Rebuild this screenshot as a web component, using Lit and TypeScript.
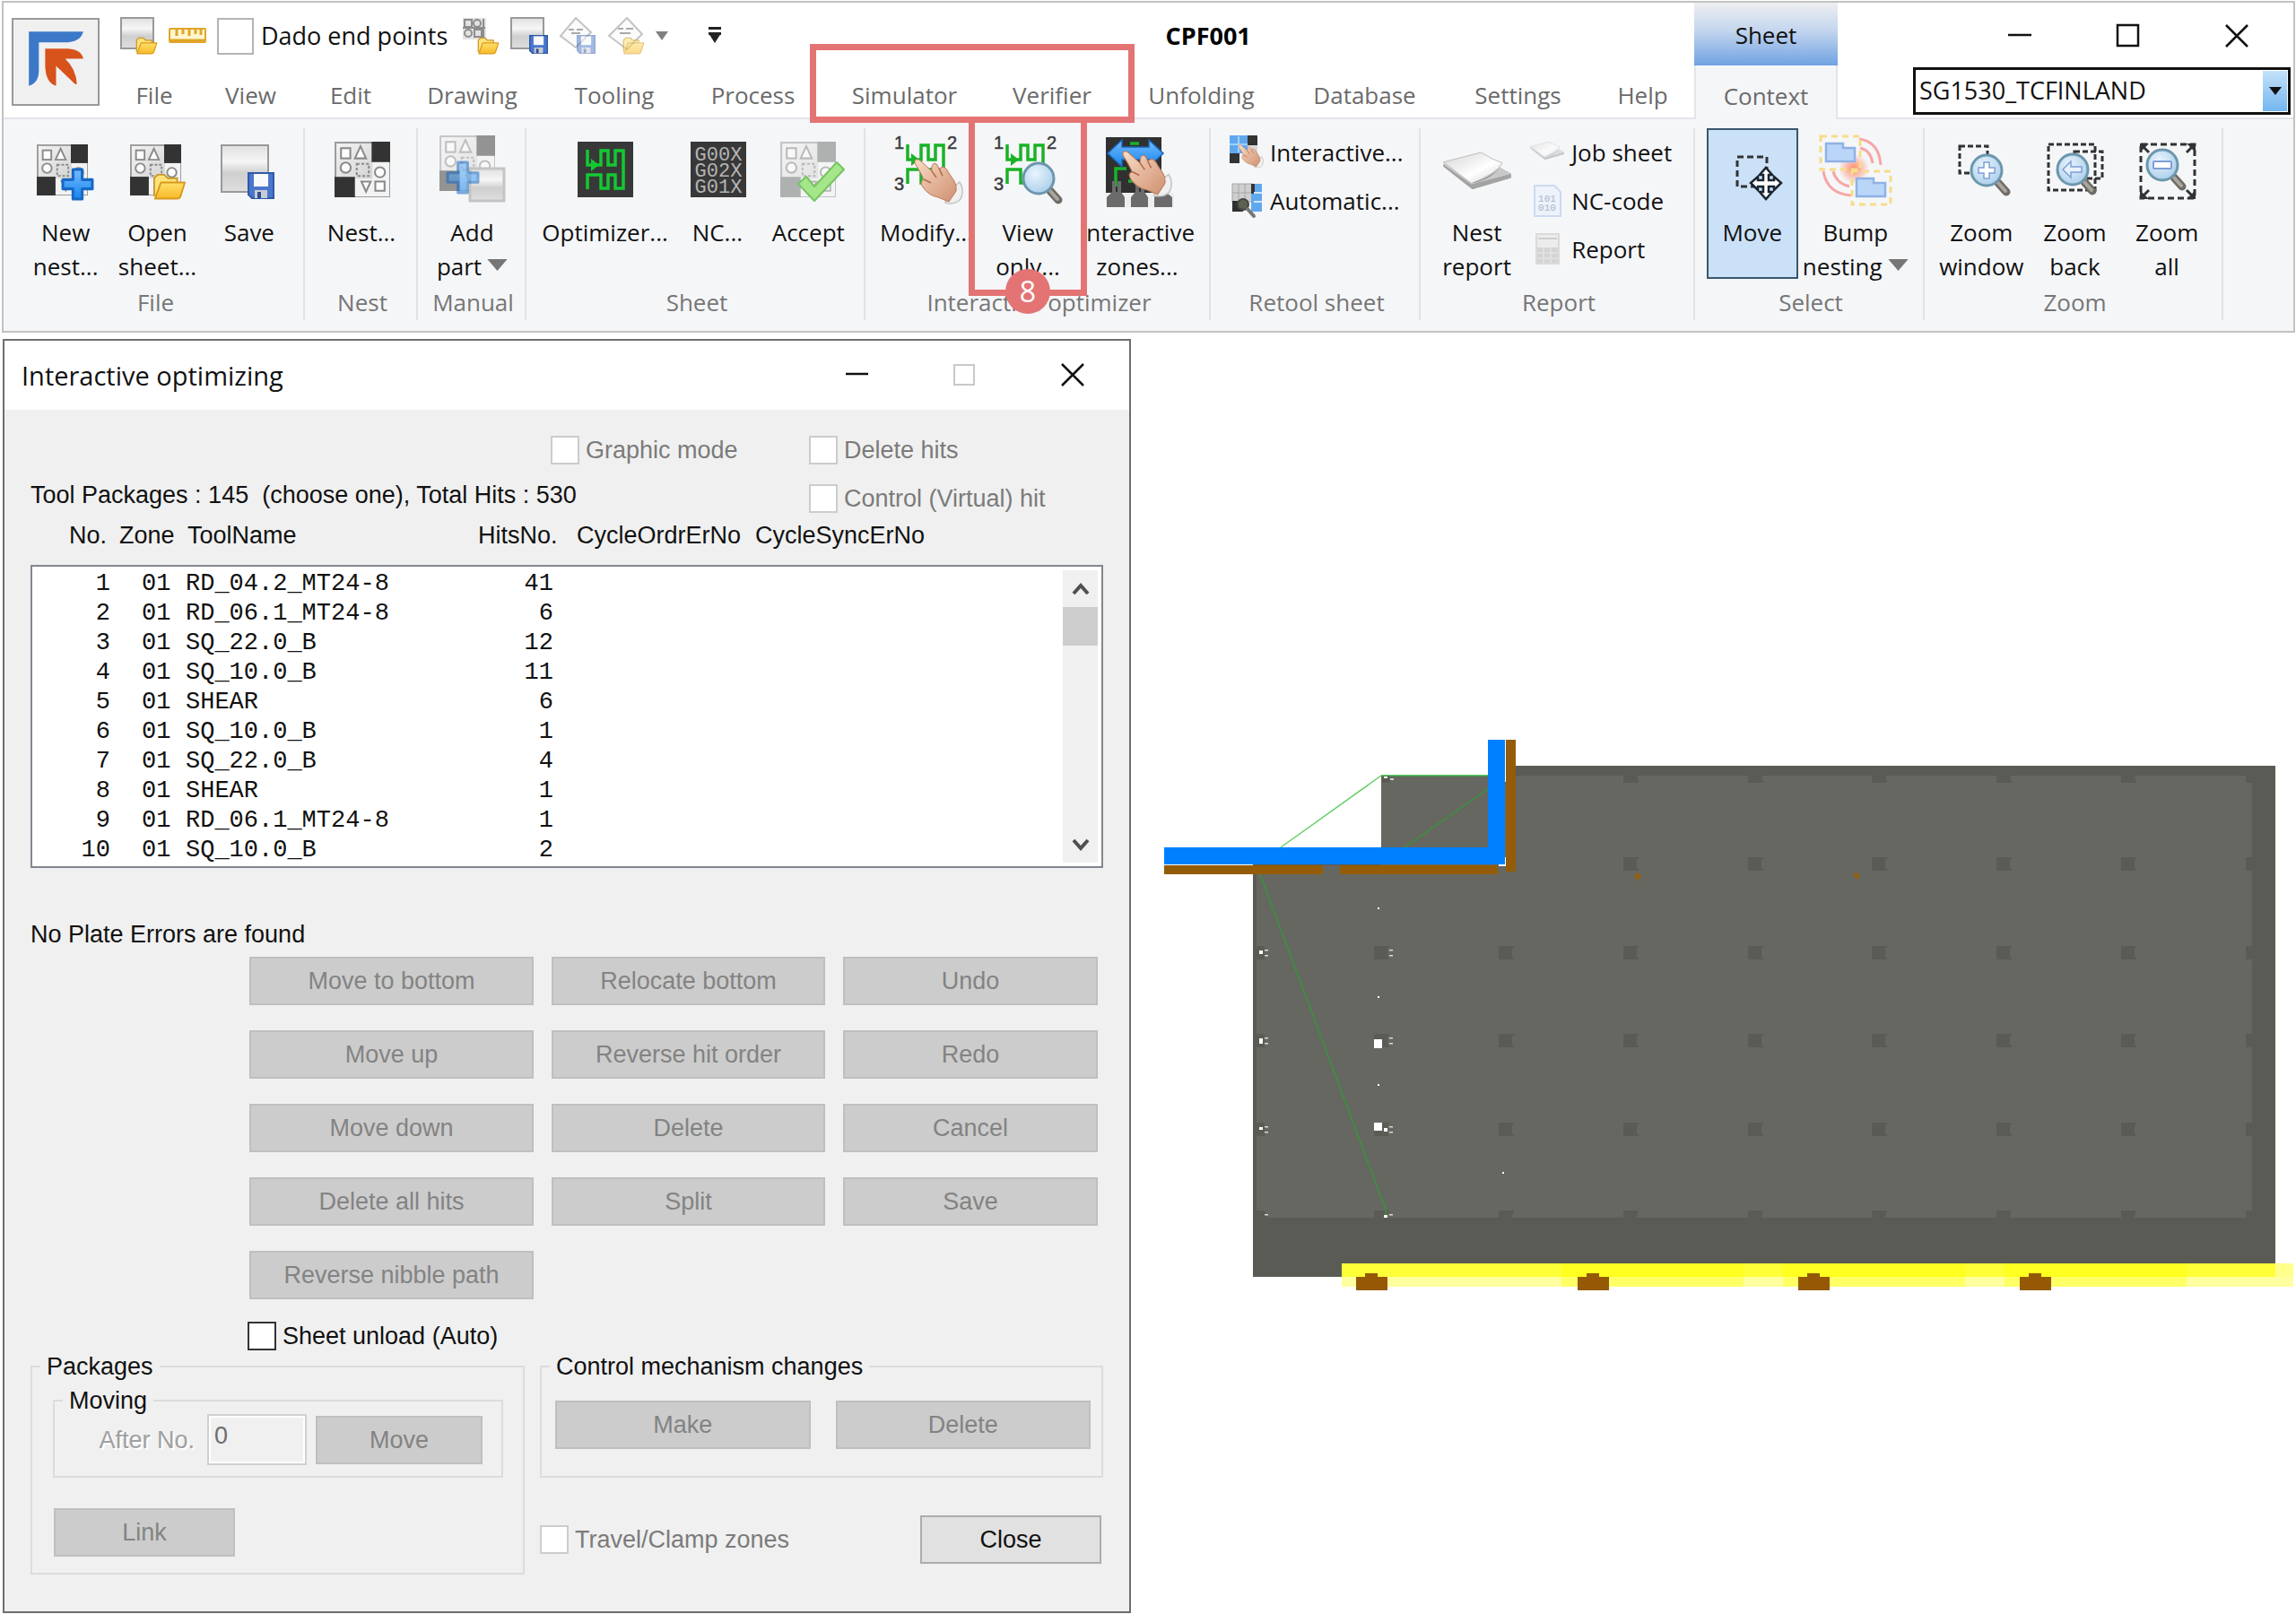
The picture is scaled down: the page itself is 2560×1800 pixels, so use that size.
import { LitElement, html, svg, css, nothing } from "lit";
import { customElement } from "lit/decorators.js";

/* ---------- shared icon parts ---------- */

/* Nested sheet: outlined parts on grey, with two dark remnant squares. */
const nestSheet = (x: number, y: number, size: number, dark = "#333333", opacity = 1) => svg`
  <svg x=${x} y=${y} width=${size} height=${size} viewBox="0 0 60 60" opacity=${opacity}>
    <rect x="1" y="1" width="58" height="58" fill="url(#sheet)" stroke="#9c9c9c" stroke-width="2"/>
    <path d="M21 40V59H59V22H41V40Z" fill="#f3f3f3"/>
    <rect x="40" y="0" width="20" height="22" fill=${dark}/>
    <rect x="0" y="38" width="22" height="22" fill=${dark}/>
    <g fill="#fdfdfd" stroke="#8a8a8a" stroke-width="2">
      <rect x="7" y="7" width="10" height="11"/>
      <path d="M28 5L34 18H22Z"/>
      <circle cx="12" cy="28" r="5.5"/>
      <rect x="24" y="24" width="13" height="13" fill="none" stroke-dasharray="3 2"/>
      <circle cx="49" cy="33" r="5.5"/>
      <path d="M29 43H39L34 54Z"/>
      <rect x="44" y="43" width="10" height="10"/>
    </g>
  </svg>`;

const folder = (x: number, y: number, w: number) => svg`
  <svg x=${x} y=${y} width=${w} height=${w * 0.8} viewBox="0 0 40 32">
    <path d="M2 27V6L6 2H14L18 6H29V12" fill="#ffe27a" stroke="#c9982a" stroke-width="2"/>
    <path d="M3 30L10 11H38L33 27Q32 30 29 30Z" fill="url(#gold)" stroke="#d79a1c" stroke-width="2" stroke-linejoin="round"/>
  </svg>`;

const floppy = (x: number, y: number, w: number) => svg`
  <svg x=${x} y=${y} width=${w} height=${w} viewBox="0 0 30 30">
    <path d="M1 1H29V29H5L1 25Z" fill="#4a77cc" stroke="#3059a8" stroke-width="2"/>
    <rect x="7" y="2" width="16" height="14" fill="#f7f9fc"/>
    <rect x="8" y="20" width="14" height="9" fill="#c9ccd2"/>
    <rect x="11" y="22" width="4" height="7" fill="#2d4f93"/>
  </svg>`;

const plus = (x: number, y: number, w: number) => svg`
  <svg x=${x} y=${y} width=${w} height=${w} viewBox="0 0 36 36">
    <path d="M13 2H23V13H34V23H23V34H13V23H2V13H13Z" fill="url(#azure)" stroke="#1769c4" stroke-width="3" stroke-linejoin="round"/>
  </svg>`;

const hand = (x: number, y: number, w: number) => svg`
  <svg x=${x} y=${y} width=${w} height=${w * 0.93} viewBox="0 0 56 52">
    <path d="M38 37L52 26Q58 35 53 45Q47 52 36 49Z" fill="#efefef" stroke="#c4c4c4" stroke-width="1.5"/>
    <path d="M2 2Q5 -1 9 3L21 14Q20 6 24 5Q27 5 29 11L34 9Q38 11 40 16L46 25Q49 30 48 36L40 48L28 43Q18 41 12 33Q6 26 12 23Q9 16 2 5Z" fill="url(#skin)" stroke="#b9795a" stroke-width="1"/>
    <path d="M21 14L26 21M29 11L33 19M12 23L20 27" stroke="#b06a4a" stroke-width="1.5" fill="none"/>
  </svg>`;

const glass = (cx: number, cy: number, sign: unknown = nothing) => svg`
  <svg x=${cx - 20} y=${cy - 20} width="48" height="50" viewBox="0 0 48 50">
    <path d="M33 34L42 44" stroke="#6f6b66" stroke-width="9" stroke-linecap="round"/>
    <path d="M33 34L41 43" stroke="#aaa59d" stroke-width="4" stroke-linecap="round"/>
    <circle cx="20" cy="20" r="17" fill="url(#lens)" stroke="#6c97ad" stroke-width="3"/>
    ${sign}
  </svg>`;

/* Punching path that meanders and ends in an arrow head. */
const meander = (x: number, y: number, color: string) => svg`
  <svg x=${x} y=${y} width="44" height="48" viewBox="0 0 44 48">
    <path d="M2 2V19H17V3H25V19H33V3H42V45H33V30H25V45H17V30H2V46" fill="none" stroke=${color} stroke-width="3.5"/>
    <path d="M6 12L15 19L6 26Z" fill=${color}/>
  </svg>`;

const pathDigits = (x: number) => svg`
  <g font-family="Liberation Sans, sans-serif" font-size="20" fill="#3c3c3c" stroke="#3c3c3c" stroke-width="0.5">
    <text x=${x} y="18">1</text><text x=${x + 59} y="18">2</text><text x=${x} y="64">3</text>
  </g>`;

const paper = (x: number, y: number, w: number, opacity = 1) => svg`
  <svg x=${x} y=${y} width=${w} height=${w * 0.56} viewBox="0 0 80 45" opacity=${opacity}>
    <path d="M1 15L33 38L78 26V31L34 44L1 18Z" fill="#a3a3a3"/>
    <path d="M1 15L33 38L78 26L64 18Z" fill="#c9c9c9"/>
    <path d="M1 13L44 2Q56 10 68 14Q62 26 33 37Z" fill="url(#page)" stroke="#bdbdbd" stroke-width="1"/>
    <path d="M68 14Q62 28 33 37Q58 33 68 14Z" fill="#8f8f8f"/>
  </svg>`;

const big = (body: unknown) => html`<svg class="big-icon" viewBox="0 0 84 84" aria-hidden="true">${body}</svg>`;
const small = (body: unknown) => html`<svg class="small-icon" viewBox="0 0 40 40" aria-hidden="true">${body}</svg>`;

const bumpPart = (x: number, y: number) => svg`
  <path transform="translate(${x} ${y})" d="M1 1H20V6H33V21H1Z" fill="#b9d6f8" stroke="#8fb2e4" stroke-width="2.5"/>`;

const icons = {
  newNest: big(svg`${nestSheet(10, 13, 57)}${plus(37, 39, 37)}`),
  openSheet: big(svg`${nestSheet(12, 13, 57)}${folder(37, 45, 38)}`),
  save: big(svg`<rect x="11" y="14" width="52" height="52" fill="url(#metal)" stroke="#999" stroke-width="2"/>${floppy(40, 44, 30)}`),
  nest: big(nestSheet(12, 10, 62)),
  addPart: big(svg`
    ${nestSheet(5, 3, 62, "#333333", 0.5)}
    <rect x="39" y="40" width="38" height="36" fill="url(#metal)" stroke="#c4c4c4" stroke-width="3"/>
    <g opacity="0.55">${plus(12, 31, 38)}</g>`),
  optimizer: big(svg`<rect x="11" y="10" width="62" height="62" fill="#383838"/>${meander(20, 17, "#12c931")}`),
  nc: big(svg`
    <rect x="12" y="10" width="62" height="62" fill="#383838"/>
    <g font-family="Liberation Mono, monospace" font-size="22" fill="#b4b4b4" text-anchor="middle">
      <text x="43" y="31">G00X</text><text x="43" y="49">G02X</text><text x="43" y="67">G01X</text>
    </g>`),
  accept: big(svg`
    ${nestSheet(11, 10, 62, "#777777", 0.55)}
    <path d="M31 57L40 49L49 60L74 33L82 41L49 76Z" fill="#a5e68a" stroke="#77c562" stroke-width="2" stroke-linejoin="round"/>`),
  modify: big(svg`${pathDigits(6)}${meander(19, 11, "#18b327")}${hand(27, 29, 56)}`),
  viewOnly: big(svg`${pathDigits(4)}${meander(17, 11, "#18b327")}${glass(54, 51)}`),
  zones: big(svg`
    <rect x="7" y="5" width="62" height="62" fill="#303030"/>
    <path d="M18 60V40H30M34 12H44M32 54H42" stroke="#17b32a" stroke-width="3.5" fill="none"/>
    <path d="M9 23L25 8V16H55V8L71 23L55 38V30H25V38Z" fill="url(#azure)" stroke="#1a64b4" stroke-width="1.5"/>
    <rect x="7" y="67" width="76" height="16" fill="#eceef0"/>
    <path d="M8 83V72L14 66V54H18V66H20V54H24V66L28 72V83ZM35 83V72L40 66V56H44V66H46V56H50V66L54 72V83ZM61 83V72L66 68H76L81 72V83Z" fill="#6b6b6b"/>
    ${hand(24, 20, 57)}`),
  nestReport: big(paper(3, 20, 79)),
  move: big(svg`
    <rect x="25" y="27" width="33" height="33" fill="none" stroke="#333" stroke-width="3" stroke-dasharray="7 4"/>
    <path d="M57 39L64 47H60V53H66V49L74 56L66 64V60H60V66H64L57 74L50 66H54V60H48V64L40 56L48 49V53H54V47H50Z" fill="#fff" stroke="#1b2430" stroke-width="2.5"/>`),
  bump: big(svg`
    <circle cx="40" cy="40" r="17" fill="url(#glow)"/>
    <g fill="none" stroke="#f6a6a6" stroke-width="3">
      <path d="M46 7Q68 10 70 36M47 17Q59 20 61 34M6 43Q10 68 37 70M17 43Q20 56 35 60"/>
    </g>
    <g fill="none" stroke="#f7dc88" stroke-width="3" stroke-dasharray="7 5">
      <rect x="3" y="4" width="44" height="37"/><rect x="38" y="43" width="43" height="37"/>
    </g>
    ${bumpPart(8, 11)}${bumpPart(42, 50)}`),
  zoomWindow: big(svg`
    <rect x="18" y="15" width="31" height="30" fill="none" stroke="#333" stroke-width="3" stroke-dasharray="6 3"/>
    ${glass(48, 42, svg`<path d="M17 11H23V17H29V23H23V29H17V23H11V17H17Z" fill="#fff" stroke="#7d9fd8" stroke-width="1.5"/>`)}`),
  zoomBack: big(svg`
    <g fill="none" stroke="#333" stroke-width="3" stroke-dasharray="6 3">
      <rect x="13" y="13" width="52" height="51"/><rect x="42" y="21" width="31" height="30"/>
    </g>
    ${glass(40, 41, svg`<path d="M9 20L18 11V17H30V23H18V29Z" fill="#e9f1ff" stroke="#7d9fd8" stroke-width="1.5"/>`)}`),
  zoomAll: big(svg`
    <rect x="13" y="13" width="60" height="60" fill="none" stroke="#333" stroke-width="3" stroke-dasharray="7 4"/>
    <path d="M12 12H22L12 22ZM74 12V22L64 12ZM12 74V64L22 74ZM74 74H64L74 64Z" fill="#333"/>
    <path d="M14 14L22 22M72 14L64 22M14 72L22 64M72 72L64 64" stroke="#333" stroke-width="3"/>
    ${glass(37, 36, svg`<rect x="10" y="16" width="20" height="8" rx="1" fill="#fff" stroke="#7d9fd8" stroke-width="2"/>`)}`),
  interactive: small(svg`
    <rect x="2" y="1" width="20" height="20" fill="#5fa8ee"/><rect x="22" y="1" width="11" height="11" fill="#333"/>
    <path d="M12 2V20M2 11H22" stroke="#bcdcfb" stroke-width="1.5"/>
    <rect x="2" y="21" width="11" height="11" fill="#333"/><rect x="22" y="12" width="11" height="12" fill="#d9d9d9"/>
    ${hand(11, 11, 29)}`),
  automatic: small(svg`
    <rect x="5" y="1" width="22" height="20" fill="#cfcfcf" stroke="#a5a5a5"/>
    <path d="M12 1V21M19 1V21M5 11H27" stroke="#a5a5a5"/>
    <rect x="26" y="1" width="12" height="31" fill="#5fa8ee"/><rect x="26" y="1" width="4" height="11" fill="#333"/>
    <path d="M29 11H38M29 21H38" stroke="#cfe6fc" stroke-width="2"/>
    <rect x="5" y="20" width="12" height="12" fill="#2e2e2e"/>
    <circle cx="17" cy="24" r="6" fill="#5b6350" stroke="#444" stroke-width="2"/>
    <path d="M22 29L29 37" stroke="#777" stroke-width="4" stroke-linecap="round"/>`),
  jobSheet: small(paper(1, 7, 39, 0.55)),
  ncCode: small(svg`
    <path d="M6 3H28L35 10V37H6Z" fill="#eef2fa" stroke="#cddaf0" stroke-width="2"/>
    <g font-family="Liberation Mono, monospace" font-size="11" fill="#a9b4ca" text-anchor="middle"><text x="20" y="21">101</text><text x="20" y="31">010</text></g>`),
  report: small(svg`
    <rect x="8" y="3" width="25" height="33" fill="#ececec" stroke="#dadada" stroke-width="2"/>
    <path d="M10 8H31" stroke="#cdcdcd" stroke-width="2"/><rect x="9" y="18" width="23" height="17" fill="#d4d4d4"/>
    <path d="M9 24H32M9 30H32M16 18V35M24 18V35" stroke="#e4e4e4" stroke-width="1.5"/>`),
  openQuick: html`<svg class="quick-icon" viewBox="0 0 42 42" aria-hidden="true"><rect x="1" y="1" width="36" height="34" fill="url(#metal)" stroke="#999" stroke-width="2"/>${folder(17, 22, 25)}</svg>`,
  ruler: html`<svg class="quick-icon" viewBox="0 0 42 42" aria-hidden="true"><rect x="1" y="13" width="40" height="15" rx="1" fill="#fff6cf" stroke="#e0a528" stroke-width="2"/><path d="M9 13V21M16 13V19M23 13V21M30 13V19M36 13V20M2 26H40" stroke="#e0a528" stroke-width="3"/></svg>`,
  nestOpen: html`<svg class="quick-icon" viewBox="0 0 42 42" aria-hidden="true">
    <rect x="1" y="1" width="26" height="24" fill="#e2e2e2"/><g fill="none" stroke="#8d8d8d" stroke-width="2"><rect x="3" y="3" width="8" height="8"/><circle cx="17" cy="7" r="4"/><circle cx="7" cy="18" r="4"/><rect x="14" y="14" width="8" height="8"/><path d="M24 2V24M1 12H26"/></g>${folder(17, 22, 25)}</svg>`,
  sheetSave: html`<svg class="quick-icon" viewBox="0 0 42 42" aria-hidden="true"><rect x="1" y="1" width="36" height="34" fill="url(#metal)" stroke="#999" stroke-width="2"/>${floppy(21, 20, 21)}</svg>`,
  cutSave: html`<svg class="quick-icon" viewBox="0 0 42 42" aria-hidden="true"><path d="M19 1L36 17L19 34L2 21Z" fill="#fbfbfb" stroke="#c4c4c4" stroke-width="2"/><path d="M11 14H17M20 14H27M14 18H24" stroke="#aaa" stroke-width="2"/><g opacity="0.5">${floppy(20, 20, 21)}</g></svg>`,
  cutOpen: html`<svg class="quick-icon" viewBox="0 0 42 42" aria-hidden="true"><path d="M22 1L39 19L22 36L2 21Z" fill="#fbfbfb" stroke="#c4c4c4" stroke-width="2"/><path d="M12 13H18M21 13H29M14 18H26" stroke="#aaa" stroke-width="2"/><g opacity="0.55">${folder(17, 22, 25)}</g></svg>`,
};

const caret = html`<svg class="caret" viewBox="0 0 24 14" aria-hidden="true"><path d="M0 0H24L12 14Z" fill="#767676"/></svg>`;

const tabs = ["File", "View", "Edit", "Drawing", "Tooling", "Process", "Simulator", "Verifier", "Unfolding", "Database", "Settings", "Help"];

@customElement("app-ribbon")
export class AppRibbon extends LitElement {
  static styles = css`
    :host { display: block; font: 27px/38px "Open Sans", "Noto Sans", sans-serif; color: #111; }
    * { box-sizing: border-box; }
    button, select { font: inherit; color: inherit; background: none; border: 0; padding: 0; margin: 0; border-radius: 0; }
    .ribbon { margin: 1px 1px 0 2px; border: 2px solid #c2c2c2; background: #f5f6f8; }
    .header { display: grid; grid-template-columns: 119px minmax(0, 1766fr) minmax(0, 160fr) minmax(0, 508fr); background: #fff; border-bottom: 2px solid #e2e5e9; }
    .logo { width: 98px; height: 98px; margin: 17px 0 0 9px; background: #f0f0f0; border: 2px solid #999; }
    .logo svg { display: block; width: 100%; height: 100%; }
    .title-row { display: flex; align-items: center; height: 70px; padding-top: 4px; }
    .quick { display: flex; align-items: center; gap: 12px; padding-left: 11px; }
    .quick button { display: flex; }
    .quick-icon { width: 42px; height: 42px; }
    .dado { display: flex; align-items: center; gap: 8px; margin-right: 4px; }
    .dado input { appearance: none; width: 41px; height: 41px; margin: 0; border: 2px solid #b4b4b4; background: #fff; }
    .drop { width: 14px; height: 10px; }
    .customize { margin-left: 32px; width: 16px; height: 22px; }
    .doc-title { flex: 1; text-align: center; font-weight: 700; font-size: 27px; color: #000; }
    .tabs { position: relative; display: grid; height: 58px; grid-template-columns: 98fr 117fr 106fr 165fr 152fr 157fr 181fr 148fr 185fr 179fr 163fr 115fr; }
    .tab { display: flex; align-items: center; justify-content: center; padding-top: 7px; color: #6b6b6b; font-size: 26px; text-decoration: none; min-width: 0; }
    .tab-mark { position: absolute; grid-column: 7 / 9; inset: -24px -18px -6px -15px; border: 7px solid #e47474; pointer-events: none; z-index: 2; }
    .context-head { display: flex; align-items: center; justify-content: center; height: 70px; padding-top: 2px; font-size: 26px; background: linear-gradient(#eeeff1, #c3d5ee 45%, #6fa2e2); }
    .context-tab { height: 60px; margin-bottom: -2px; background: #f5f6f8; border: 1px solid #e2e5e9; border-width: 0 2px; }
    .window-side { padding-right: 3px; }
    .window-buttons { display: flex; justify-content: flex-end; height: 72px; }
    .window-buttons button { width: 121px; display: flex; align-items: center; justify-content: center; }
    .window-buttons svg { width: 28px; height: 28px; }
    .machine { position: relative; margin-left: 84px; }
    .machine select { appearance: none; display: block; width: 100%; height: 53px; padding: 0 40px 2px 4px; border: 3px solid #111; background: #fff; font-size: 27px; }
    .machine-arrow { position: absolute; top: 4px; right: 4px; bottom: 4px; width: 27px; display: flex; align-items: center; justify-content: center; background: linear-gradient(#c4e2fb, #73b6ef); pointer-events: none; }
    .machine-arrow svg { width: 14px; height: 9px; }
    .groups { display: grid; grid-template-columns: 335fr 126fr 121fr 378fr 385fr 234fr 306fr 256fr 333fr 78fr; padding: 10px 0 12px 1px; font-size: 26px; }
    .group { display: flex; flex-direction: column; justify-content: space-between; min-width: 0; min-height: 214px; border-right: 2px solid #e0e3e6; }
    .group:last-child { border: 0; }
    .group-label { padding-left: 4px; text-align: center; color: #767676; line-height: 40px; white-space: nowrap; }
    .items { display: grid; align-items: start; }
    .file { padding: 0 9px 0 17px; grid-template-columns: repeat(3, 1fr); }
    .single { grid-template-columns: 1fr; padding-left: 2px; }
    .sheet { padding: 0 10px 0 12px; grid-template-columns: 152fr 100fr 104fr; }
    .optimizer { padding: 0 13px 0 10px; grid-template-columns: 116fr 110fr 134fr; }
    .retool { padding-left: 19px; }
    .report { padding-left: 12px; grid-template-columns: 104fr 188fr; gap: 8px; }
    .select { padding: 0 11px 0 13px; grid-template-columns: 102fr 129fr; }
    .zoom { padding: 0 10px 0 11px; grid-template-columns: 105fr 104fr 102fr; }
    .large { position: relative; display: flex; flex-direction: column; align-items: center; gap: 8px; min-height: 168px; padding-top: 5px; min-width: 0; }
    .large span { white-space: nowrap; text-align: center; }
    .pressed { background: #cbe1f8; box-shadow: inset 0 0 0 2px #3a566b; }
    .big-icon { width: 84px; height: 84px; flex: none; }
    .caret { width: 23px; height: 13px; margin-left: 6px; vertical-align: 5px; }
    .stack { display: grid; }
    .stack button { display: flex; align-items: center; gap: 7px; height: 54px; white-space: nowrap; text-align: left; }
    .small-icon { width: 40px; height: 40px; flex: none; }
    .view-mark { position: absolute; inset: -13px -11px auto; height: 200px; border: 7px solid #e47474; pointer-events: none; z-index: 2; }
    .badge { position: absolute; left: calc(50% - 25px); bottom: -27px; width: 50px; height: 50px; border-radius: 50%; background: #e47474; color: #fff; display: flex; align-items: center; justify-content: center; font-size: 32px; }
    .defs { position: absolute; width: 0; height: 0; }
  `;

  private large(icon: unknown, lines: unknown, extra: unknown = nothing, pressed = false) {
    return html`<button class=${pressed ? "large pressed" : "large"}>${icon}<span>${lines}</span>${extra}</button>`;
  }

  render() {
    return html`
      <svg class="defs" aria-hidden="true">
        <defs>
          <linearGradient id="sheet" x1="0" y1="0" x2="1" y2="1"><stop offset="0" stop-color="#f4f4f4"/><stop offset="1" stop-color="#c4c4c4"/></linearGradient>
          <linearGradient id="metal" x1="0" y1="0" x2="0" y2="1"><stop offset="0" stop-color="#e0e0e0"/><stop offset="0.35" stop-color="#f6f6f6"/><stop offset="0.6" stop-color="#cfcfcf"/><stop offset="1" stop-color="#dedede"/></linearGradient>
          <linearGradient id="gold" x1="0" y1="0" x2="0" y2="1"><stop offset="0" stop-color="#ffe069"/><stop offset="1" stop-color="#f8b928"/></linearGradient>
          <linearGradient id="azure" x1="0" y1="0" x2="0" y2="1"><stop offset="0" stop-color="#74baff"/><stop offset="1" stop-color="#1686ee"/></linearGradient>
          <linearGradient id="skin" x1="0" y1="0" x2="1" y2="1"><stop offset="0" stop-color="#f9dcc6"/><stop offset="1" stop-color="#cf8f70"/></linearGradient>
          <linearGradient id="page" x1="0" y1="0" x2="1" y2="1"><stop offset="0" stop-color="#d4d4d4"/><stop offset="0.6" stop-color="#ffffff"/><stop offset="1" stop-color="#d0d0d0"/></linearGradient>
          <radialGradient id="lens" cx="0.4" cy="0.35" r="0.7"><stop offset="0" stop-color="#e9f4fd"/><stop offset="1" stop-color="#a9cdea"/></radialGradient>
          <radialGradient id="glow"><stop offset="0" stop-color="#ff8a6a"/><stop offset="1" stop-color="#ff8a6a" stop-opacity="0"/></radialGradient>
        </defs>
      </svg>
      <div class="ribbon">
        <header class="header">
          <button class="logo" aria-label="Application menu">
            <svg viewBox="0 0 93 93"><path d="M17 13H77Q74 25 56 25H28V56Q28 70 17 73Z" fill="#3c78c8"/><path d="M35 32H60Q75 33 77 43L57 43Q69 54 70 71L68 71L47 51V73Q36 70 35 52Z" fill="#d8521c"/></svg>
          </button>
          <div>
            <div class="title-row">
              <div class="quick">
                <button aria-label="Open sheet">${icons.openQuick}</button>
                <button aria-label="Measure">${icons.ruler}</button>
                <label class="dado"><input type="checkbox" />Dado end points</label>
                <button aria-label="Open nest">${icons.nestOpen}</button>
                <button aria-label="Save sheet">${icons.sheetSave}</button>
                <button aria-label="Save tool path">${icons.cutSave}</button>
                <button aria-label="Open tool path">${icons.cutOpen}</button>
                <button aria-label="More files"><svg class="drop" viewBox="0 0 14 10"><path d="M0 0H14L7 10Z" fill="#808080"/></svg></button>
                <button aria-label="Customize toolbar"><svg class="customize" viewBox="0 0 16 22"><path d="M1 1H15V4H1ZM1 8H15L8 19ZM1 7H15V10H1Z" fill="#222"/></svg></button>
              </div>
              <div class="doc-title">CPF001</div>
            </div>
            <nav class="tabs">
              ${tabs.map((t) => html`<a class="tab" href="#">${t}</a>`)}
              <div class="tab-mark"></div>
            </nav>
          </div>
          <div>
            <div class="context-head">Sheet</div>
            <a class="tab context-tab" href="#">Context</a>
          </div>
          <div class="window-side">
            <div class="window-buttons">
              <button aria-label="Minimize"><svg viewBox="0 0 28 28"><path d="M1 14H27" stroke="#111" stroke-width="2.5"/></svg></button>
              <button aria-label="Maximize"><svg viewBox="0 0 28 28"><rect x="2" y="3" width="23" height="23" fill="none" stroke="#111" stroke-width="2.5"/></svg></button>
              <button aria-label="Close"><svg viewBox="0 0 28 28"><path d="M2 3L26 27M26 3L2 27" stroke="#111" stroke-width="2.5"/></svg></button>
            </div>
            <div class="machine">
              <select aria-label="Machine"><option>SG1530_TCFINLAND</option></select>
              <span class="machine-arrow"><svg viewBox="0 0 14 9"><path d="M0 0H14L7 9Z" fill="#111"/></svg></span>
            </div>
          </div>
        </header>
        <div class="groups">
          <section class="group">
            <div class="items file">
              ${this.large(icons.newNest, html`New<br />nest...`)}
              ${this.large(icons.openSheet, html`Open<br />sheet...`)}
              ${this.large(icons.save, "Save")}
            </div>
            <div class="group-label">File</div>
          </section>
          <section class="group">
            <div class="items single">${this.large(icons.nest, "Nest...")}</div>
            <div class="group-label">Nest</div>
          </section>
          <section class="group">
            <div class="items single">${this.large(icons.addPart, html`Add<br />part${caret}`)}</div>
            <div class="group-label">Manual</div>
          </section>
          <section class="group">
            <div class="items sheet">
              ${this.large(icons.optimizer, "Optimizer...")}
              ${this.large(icons.nc, "NC...")}
              ${this.large(icons.accept, "Accept")}
            </div>
            <div class="group-label">Sheet</div>
          </section>
          <section class="group">
            <div class="items optimizer">
              ${this.large(icons.modify, "Modify...")}
              ${this.large(icons.viewOnly, html`View<br />only...`, html`<div class="view-mark"><div class="badge">8</div></div>`)}
              ${this.large(icons.zones, html`Interactive<br />zones...`)}
            </div>
            <div class="group-label">Interactive optimizer</div>
          </section>
          <section class="group">
            <div class="stack retool">
              <button>${icons.interactive}Interactive...</button>
              <button>${icons.automatic}Automatic...</button>
            </div>
            <div class="group-label">Retool sheet</div>
          </section>
          <section class="group">
            <div class="items report">
              ${this.large(icons.nestReport, html`Nest<br />report`)}
              <div class="stack">
                <button>${icons.jobSheet}Job sheet</button>
                <button>${icons.ncCode}NC-code</button>
                <button>${icons.report}Report</button>
              </div>
            </div>
            <div class="group-label">Report</div>
          </section>
          <section class="group">
            <div class="items select">
              ${this.large(icons.move, "Move", nothing, true)}
              ${this.large(icons.bump, html`Bump<br />nesting${caret}`)}
            </div>
            <div class="group-label">Select</div>
          </section>
          <section class="group">
            <div class="items zoom">
              ${this.large(icons.zoomWindow, html`Zoom<br />window`)}
              ${this.large(icons.zoomBack, html`Zoom<br />back`)}
              ${this.large(icons.zoomAll, html`Zoom<br />all`)}
            </div>
            <div class="group-label">Zoom</div>
          </section>
          <section class="group"></section>
        </div>
      </div>`;
  }
}

const packages: [number, string, string, number][] = [
  [1, "01", "RD_04.2_MT24-8", 41],
  [2, "01", "RD_06.1_MT24-8", 6],
  [3, "01", "SQ_22.0_B", 12],
  [4, "01", "SQ_10.0_B", 11],
  [5, "01", "SHEAR", 6],
  [6, "01", "SQ_10.0_B", 1],
  [7, "01", "SQ_22.0_B", 4],
  [8, "01", "SHEAR", 1],
  [9, "01", "RD_06.1_MT24-8", 1],
  [10, "01", "SQ_10.0_B", 2],
];

const actions = [
  "Move to bottom", "Relocate bottom", "Undo",
  "Move up", "Reverse hit order", "Redo",
  "Move down", "Delete", "Cancel",
  "Delete all hits", "Split", "Save",
  "Reverse nibble path",
];

@customElement("optimizing-dialog")
export class OptimizingDialog extends LitElement {
  static styles = css`
    :host { display: block; font: 27px/32px "Liberation Sans", Arial, sans-serif; color: #111; }
    * { box-sizing: border-box; }
    button, input { font: inherit; margin: 0; border-radius: 0; }
    .dialog { border: 2px solid #6e6e6e; background: #f0f0f0; }
    .title-bar { display: flex; align-items: center; height: 77px; padding: 0 2px 0 19px; background: #fff; font: 29px/38px "Open Sans", "Noto Sans", sans-serif; }
    .title { flex: 1; }
    .title-bar button { display: flex; align-items: center; justify-content: center; width: 120px; height: 77px; padding: 0; border: 0; background: none; }
    .title-bar svg { width: 28px; height: 28px; }
    .body { padding: 28px 29px 41px; }
    .options { display: grid; grid-template-columns: 580fr 288fr 328fr; row-gap: 21px; }
    .check { display: flex; align-items: center; gap: 7px; height: 33px; white-space: nowrap; }
    .check input { appearance: none; width: 32px; height: 32px; border: 2px solid #333; background: #fff; }
    .muted { color: #7b7b7b; }
    .muted input { border-color: #cccccc; }
    .graphic { grid-column: 2; }
    .summary { grid-column: 1 / 3; line-height: 27px; white-space: pre; }
    .list { display: grid; grid-template-columns: 1fr 45px; margin-top: 9px; }
    table { display: block; }
    thead { display: block; padding-bottom: 17px; }
    tbody { display: block; padding: 3px 0 1px; border: 2px solid #82878f; border-right: 0; background: #fff; font-family: "Liberation Mono", "Courier New", monospace; }
    tr { display: grid; }
    th, td { padding: 0; font-weight: 400; text-align: left; white-space: nowrap; }
    thead tr { grid-template-columns: 85px 76px 324px 110px 199px 1fr; }
    thead th:not(:first-child) { padding-left: 14px; }
    tbody tr { grid-template-columns: 87px 84px 300px 110px; line-height: 33px; }
    tbody td:nth-child(2) { padding-left: 35px; }
    .number { text-align: right; }
    .scroll { display: flex; flex-direction: column; align-items: center; margin-top: 49px; padding: 4px 4px 4px 0; border: 2px solid #82878f; border-left: 0; background: #fff; }
    .track { display: flex; flex-direction: column; flex: 1; width: 39px; background: #f0f0f0; }
    .scroll button { display: flex; align-items: center; justify-content: center; height: 41px; width: 100%; padding: 0; border: 0; background: none; }
    .scroll svg { width: 20px; height: 14px; }
    .thumb { height: 43px; background: #cdcdcd; }
    .space { flex: 1; }
    .status { margin-top: 58px; }
    .actions { display: grid; grid-template-columns: 317fr 305fr 284fr; gap: 28px 20px; margin: 9px 6px 0 244px; }
    .push { height: 54px; padding: 0; border: 2px solid #bfbfbf; background: #cccccc; color: #838383; }
    .unload { margin: 24px 0 0 242px; }
    .panels { display: grid; grid-template-columns: 551fr 628fr; gap: 17px; margin-top: 3px; align-items: start; }
    fieldset { margin: 0; padding: 0; border: 2px solid #dcdcdc; min-width: 0; }
    legend { margin-left: 9px; padding: 0 7px; line-height: 30px; }
    .packages { padding: 8px 22px 18px 23px; }
    .moving { display: flex; align-items: center; justify-content: flex-end; gap: 10px; padding: 0 21px 12px; }
    .after { display: flex; align-items: center; gap: 14px; color: #a0a0a0; text-shadow: 2px 2px 0 #fff; }
    .after input { width: 111px; height: 57px; padding: 0 6px 8px; border: 2px solid #d0d0d0; background: #f0f0f0; color: #6d6d6d; box-shadow: inset 0 0 0 2px #fff; }
    .move { width: 186px; }
    .link { width: 202px; margin: 34px 0 0 1px; display: block; }
    .mechanism { display: grid; grid-template-columns: 1fr 1fr; gap: 28px; padding: 23px 12px 30px 15px; }
    .footer { display: flex; align-items: center; justify-content: space-between; margin-top: 42px; padding-right: 2px; }
    .close { width: 202px; border-color: #adadad; background: #e1e1e1; color: #111; }
  `;

  render() {
    return html`
      <section class="dialog" role="dialog" aria-labelledby="dialog-title">
        <header class="title-bar">
          <span class="title" id="dialog-title">Interactive optimizing</span>
          <button aria-label="Minimize"><svg viewBox="0 0 28 28"><path d="M0 12H25" stroke="#111" stroke-width="2.5"/></svg></button>
          <button aria-label="Maximize" disabled><svg viewBox="0 0 28 28"><rect x="1" y="2" width="22" height="22" fill="none" stroke="#c8c8c8" stroke-width="2"/></svg></button>
          <button aria-label="Close dialog"><svg viewBox="0 0 28 28"><path d="M1 1L25 25M25 1L1 25" stroke="#111" stroke-width="2.5"/></svg></button>
        </header>
        <div class="body">
          <div class="options">
            <label class="check muted graphic"><input type="checkbox" disabled />Graphic mode</label>
            <label class="check muted"><input type="checkbox" disabled />Delete hits</label>
            <div class="summary">Tool Packages : 145  (choose one), Total Hits : 530</div>
            <label class="check muted"><input type="checkbox" disabled />Control (Virtual) hit</label>
          </div>
          <div class="list">
            <table>
              <thead>
                <tr><th class="number">No.</th><th>Zone</th><th>ToolName</th><th>HitsNo.</th><th>CycleOrdrErNo</th><th>CycleSyncErNo</th></tr>
              </thead>
              <tbody>
                ${packages.map(([no, zone, tool, hits]) => html`<tr><td class="number">${no}</td><td>${zone}</td><td>${tool}</td><td class="number">${hits}</td></tr>`)}
              </tbody>
            </table>
            <div class="scroll">
              <div class="track">
                <button aria-label="Scroll up"><svg viewBox="0 0 20 14"><path d="M2 12L10 3L18 12" fill="none" stroke="#505050" stroke-width="4"/></svg></button>
                <div class="thumb"></div>
                <div class="space"></div>
                <button aria-label="Scroll down"><svg viewBox="0 0 20 14"><path d="M2 2L10 11L18 2" fill="none" stroke="#505050" stroke-width="4"/></svg></button>
              </div>
            </div>
          </div>
          <div class="status">No Plate Errors are found</div>
          <div class="actions">${actions.map((a) => html`<button class="push" disabled>${a}</button>`)}</div>
          <label class="check unload"><input type="checkbox" />Sheet unload (Auto)</label>
          <div class="panels">
            <fieldset>
              <legend>Packages</legend>
              <div class="packages">
                <fieldset>
                  <legend>Moving</legend>
                  <div class="moving">
                    <label class="after">After No.<input type="text" value="0" disabled /></label>
                    <button class="push move" disabled>Move</button>
                  </div>
                </fieldset>
                <button class="push link" disabled>Link</button>
              </div>
            </fieldset>
            <div>
              <fieldset>
                <legend>Control mechanism changes</legend>
                <div class="mechanism">
                  <button class="push" disabled>Make</button>
                  <button class="push" disabled>Delete</button>
                </div>
              </fieldset>
              <div class="footer">
                <label class="check muted"><input type="checkbox" disabled />Travel/Clamp zones</label>
                <button class="push close">Close</button>
              </div>
            </div>
          </div>
        </div>
      </section>`;
  }
}

const padColumns = [1532, 1671, 1810, 1949, 2087, 2226, 2365];
const padRows = [957, 1056, 1154, 1253];
const clamps = [1512, 1759, 2005, 2252];
const holePairs: [number, number][] = [[1410, 1060], [1410, 1158], [1410, 1257], [1549, 1060], [1549, 1158], [1549, 1257]];
const bandEdges = [1741, 1988, 2235];

@customElement("sheet-stage")
export class SheetStage extends LitElement {
  static styles = css`
    :host { display: block; }
    .stage { display: block; width: 100%; height: auto; }
  `;

  render() {
    const pad = (x: number, y: number) => svg`<path d="M${x} ${y}h18l-3 3v9l3 3h-18z" fill="#5a5b54"/>`;
    return html`
      <svg class="stage" viewBox="1261 379 1299 1418" role="img" aria-label="Sheet with tool path">
        <path d="M1540 866H1680V855H2537V1425H1397V965H1540Z" fill="#5a5b54"/>
        <path d="M1540 866H2511V1359H1401V970H1540Z" fill="#666760"/>
        ${padRows.map((y) => padColumns.map((x) => (y === 957 && x < 1800 ? nothing : pad(x, y))))}
        ${padColumns.map((x) => svg`${x > 1680 ? svg`<path d="M${x} 865h15l2 9h-17z" fill="#5a5b54"/>` : nothing}<path d="M${x} 1351h17l-3 9h-14z" fill="#5a5b54"/>`)}
        ${padRows.map((y) => svg`<rect x="2504" y=${y} width="8" height="15" fill="#5a5b54"/>${y > 1000 ? svg`<rect x="1401" y=${y} width="9" height="15" fill="#5a5b54"/>` : nothing}`)}
        <path d="M2504 866H2511V874H2504ZM2504 1351H2511V1360H2504ZM1401 1351H1410L1414 1360H1401ZM1541 867H1549V874H1541Z" fill="#5a5b54"/>

        <g fill="none" stroke="#35963a" stroke-width="1.5">
          <path d="M1428 946L1540 866" stroke="#66cf66"/>
          <path d="M1540 866H1659" stroke="#2fae3a"/>
          <path d="M1566 946L1659 881M1405 976L1545 1350V1356"/>
        </g>

        <path d="M1298 946H1659V826H1678V965H1298Z" fill="#0080ff"/>
        <path d="M1475 966H1494V976H1475Z" fill="#666760"/>
        <path d="M1298 966H1475V976H1298ZM1494 966H1670V976H1494ZM1679 826H1690V973H1679Z" fill="#945c08"/>
        <path d="M1678 826H1679V855H1678ZM1678 957H1679V967H1671V965H1678ZM1678 866H1679V873H1678Z" fill="#fff"/>
        <g fill="#966010">
          <path d="M1826 974L1830 978L1826 983L1822 978Z"/><path d="M2066 975H2074L2070 983Z"/>
        </g>

        <g fill="#fff">
          <rect x="1532" y="1160" width="9" height="10"/><rect x="1532" y="1253" width="9" height="9"/>
          <rect x="1543" y="1259" width="4" height="4"/><rect x="1404" y="1061" width="4" height="4"/>
          <rect x="1404" y="1159" width="4" height="6"/><rect x="1404" y="1258" width="4" height="3"/>
          <rect x="1536" y="1013" width="2" height="2"/><rect x="1536" y="1112" width="2" height="2"/>
          <rect x="1536" y="1210" width="2" height="2"/><rect x="1675" y="1308" width="2" height="2"/>
          <rect x="1543" y="867" width="4" height="2"/><rect x="1550" y="869" width="4" height="2" opacity="0.7"/>
          <rect x="1543" y="1356" width="4" height="3"/>
          <g opacity="0.75">
            ${holePairs.map(([x, y]) => svg`<rect x=${x} y=${y} width="4" height="1.5"/><rect x=${x} y=${y + 6} width="4" height="1.5"/>`)}
            <rect x="1410" y="1355" width="4" height="1.5"/><rect x="1549" y="1355" width="4" height="1.5"/>
          </g>
        </g>

        <rect x="1496" y="1410" width="1041" height="15" fill="#ffff38"/>
        <rect x="2537" y="1410" width="20" height="15" fill="#ffff8c"/>
        <rect x="1496" y="1425" width="1061" height="11" fill="#ffffa0"/>
        ${bandEdges.map((x) => svg`<rect x=${x} y="1410" width="203" height="15" fill="#ffff20"/><rect x=${x} y="1425" width="203" height="11" fill="#ffff66"/>`)}
        ${clamps.map((x) => svg`<path d="M${x} 1425h10v-4h14v4h11v15h-35z" fill="#955906"/>`)}
      </svg>`;
  }
}

@customElement("app-root")
export class AppRoot extends LitElement {
  static styles = css`
    :host { display: block; min-height: 100vh; background: #fff; }
    .workspace { display: grid; grid-template-columns: minmax(0, 1258fr) minmax(0, 1299fr); align-items: start; padding: 7px 0 0 3px; }
  `;

  render() {
    return html`
      <app-ribbon></app-ribbon>
      <main class="workspace">
        <optimizing-dialog></optimizing-dialog>
        <sheet-stage></sheet-stage>
      </main>`;
  }
}
